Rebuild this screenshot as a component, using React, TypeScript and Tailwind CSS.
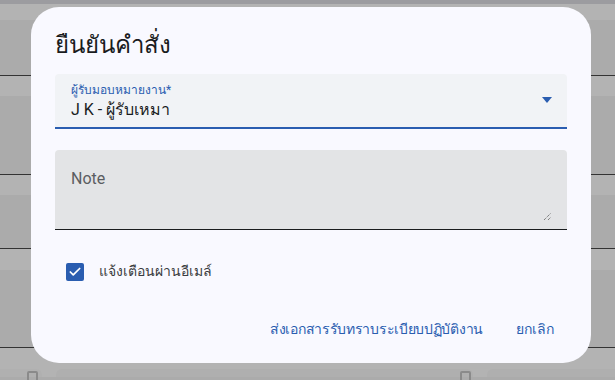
import { Check } from 'lucide-react';

const font = { fontFamily: 'Roboto, "Noto Sans", sans-serif' };

function BgRow({ light, dark }: { light: string; dark: string }) {
  return (
    <>
      <div className={`${light} bg-[#b3b3b3]`} />
      <div className={`${dark} bg-[#ababab]`} />
      <div className="h-px bg-[#333333]" />
    </>
  );
}

export default function App() {
  return (
    <div className="relative w-[615px] h-[380px] overflow-hidden bg-[#ababab]" style={font}>
      {/* dimmed page behind the dialog */}
      <div className="flex flex-col">
        <div className="h-1 bg-[#9c9ca0]" />
        <BgRow light="h-4" dark="h-[55px]" />
        <BgRow light="h-5" dark="h-[78px]" />
        <BgRow light="h-5" dark="h-[53px]" />
        <BgRow light="h-[21px]" dark="h-[77px]" />
        <div className="h-[29px] bg-[#b3b3b3] flex items-end gap-[14px]">
          <div className="w-[42px] h-2 rounded-tr-md bg-[#b0b0b0] relative">
            <div className="absolute left-[27px] top-[2px] w-[11px] h-[11px] border-2 border-[#8a8a8a] rounded-[2px]" />
          </div>
          <div className="w-[417px] h-2 rounded-t-md bg-[#afafaf] relative">
            <div className="absolute right-[2px] top-[2px] w-[11px] h-[11px] border-2 border-[#8a8a8a] rounded-[2px]" />
          </div>
          <div className="flex-1 h-2 rounded-tl-md bg-[#afafaf]" />
        </div>
      </div>

      {/* dialog */}
      <div className="absolute left-[31px] top-[7px] w-[560px] h-[356px] rounded-[28px] bg-[#f9f9ff] px-6 pt-[22px] flex flex-col">
        <h2 className="text-[24px] leading-8 text-[#1a1c1e] font-normal">ยืนยันคำสั่ง</h2>

        <div className="mt-[13px] h-[55px] rounded-t-[4px] bg-[#f1f3f6] border-b-2 border-[#2a5db0] flex items-center pl-4 pr-[14px]">
          <div className="flex-1 flex flex-col pt-[2px]">
            <span className="text-[12px] leading-4 text-[#2a5db0]">ผู้รับมอบหมายงาน*</span>
            <span className="text-[16px] leading-6 text-[#1a1c1e]">J K - ผู้รับเหมา</span>
          </div>
          <svg width="12" height="6" viewBox="0 0 12 6" className="mb-[2px]">
            <path d="M1 0h10L6 6z" fill="#2a5db0" />
          </svg>
        </div>

        <div className="mt-[21px] h-[80px] rounded-t-[4px] bg-[#e3e4e6] border-b border-[#1a1c1e] relative pl-4 pt-[17px]">
          <span className="text-[16px] leading-6 text-[#5b5d61]">Note</span>
          <svg width="9" height="9" viewBox="0 0 9 9" className="absolute right-[15px] bottom-[8px]">
            <path d="M1 8L8 1M5 8L8 5" stroke="#555" strokeWidth="1" strokeDasharray="1 1" />
          </svg>
        </div>

        <label className="mt-[31px] flex items-center gap-[15px] pl-[11px]">
          <span className="w-[18px] h-[18px] rounded-[2px] bg-[#2a5db0] flex items-center justify-center">
            <Check className="w-[14px] h-[14px] text-white" strokeWidth={3} />
          </span>
          <span className="text-[14px] text-[#3a3c40]">แจ้งเตือนผ่านอีเมล์</span>
        </label>

        <div className="mt-auto mb-[23px] flex justify-end items-center gap-[33px] pr-[13px]">
          <button className="text-[14px] font-medium text-[#2a5db0] tracking-[-0.3px]">ส่งเอกสารรับทราบระเบียบปฏิบัติงาน</button>
          <button className="text-[14px] font-medium text-[#2a5db0]">ยกเลิก</button>
        </div>
      </div>
    </div>
  );
}
